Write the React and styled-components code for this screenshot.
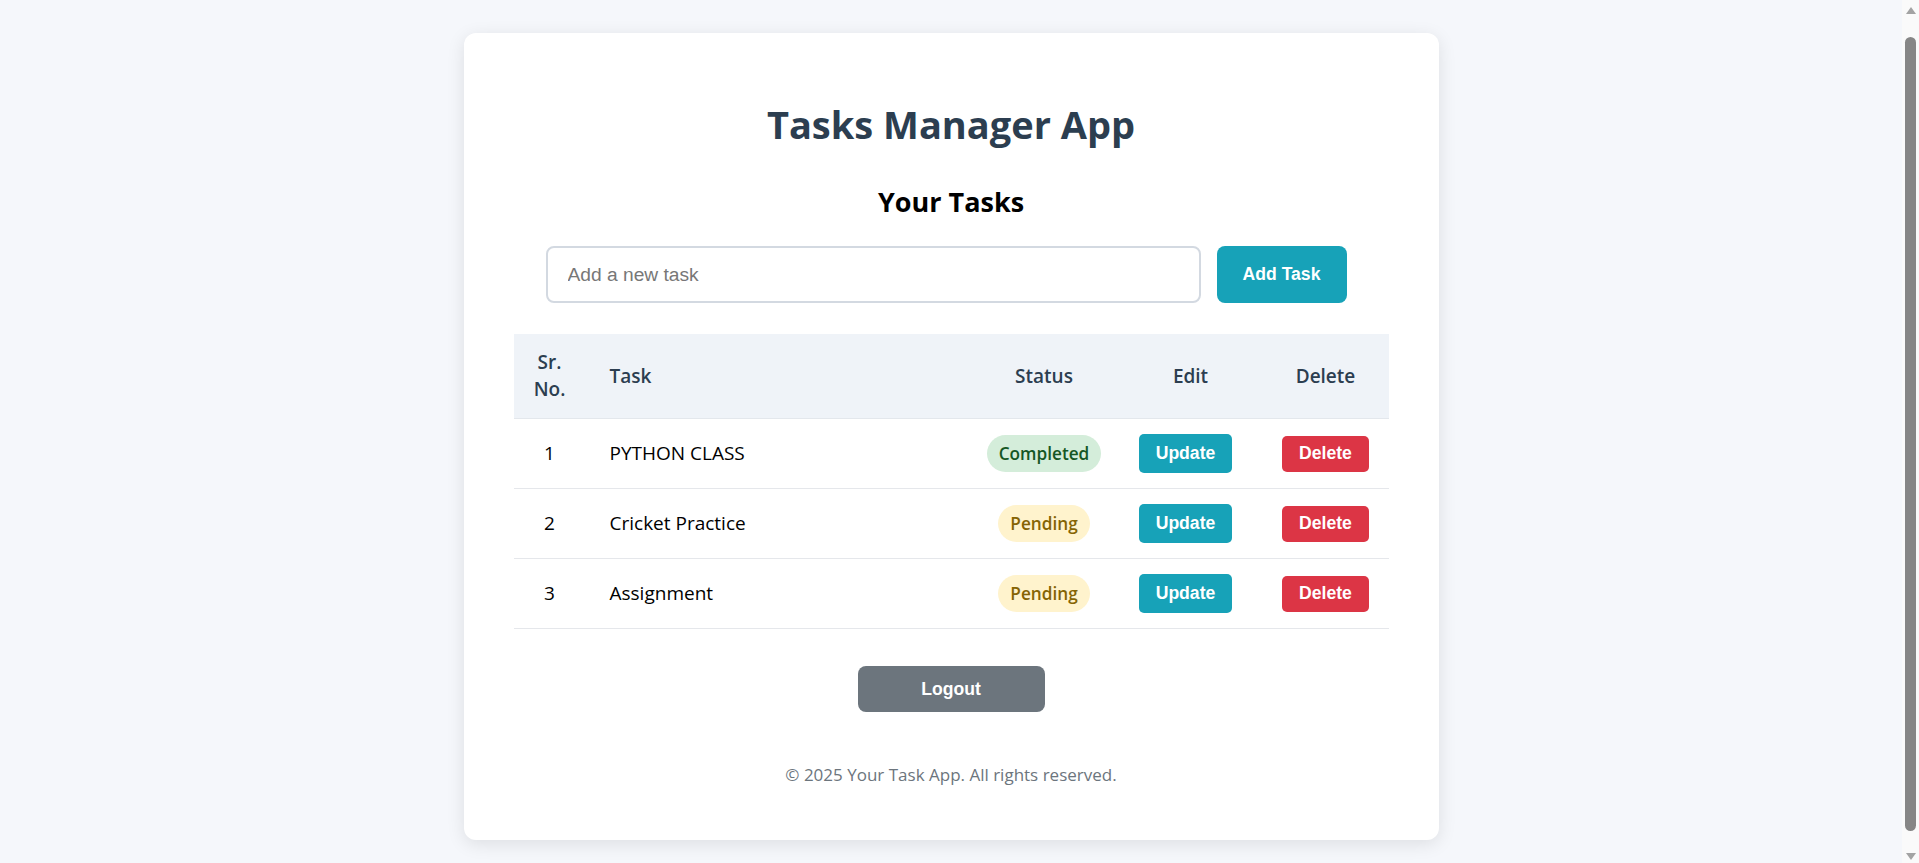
import React from "react";
import styled, { createGlobalStyle } from "styled-components";

const GlobalStyle = createGlobalStyle`
  body {
    margin: 0;
    background: #f5f7fb;
    font-family: "Open Sans", "Noto Sans", sans-serif;
  }
`;

const tasks = [
  { id: 1, title: "PYTHON CLASS", done: true },
  { id: 2, title: "Cricket Practice", done: false },
  { id: 3, title: "Assignment", done: false },
];

const App = () => {
  return (
    <React.Fragment>
      <GlobalStyle />
      <Page>
        <Card>
          <Title>Tasks Manager App</Title>
          <SubTitle>Your Tasks</SubTitle>
          <AddForm onSubmit={(e) => e.preventDefault()}>
            <TaskInput type="text" placeholder="Add a new task" />
            <AddButton type="submit">Add Task</AddButton>
          </AddForm>

          <Table>
            <colgroup>
              <col style={{ width: "72px" }} />
              <col style={{ width: "384px" }} />
              <col style={{ width: "149px" }} />
              <col style={{ width: "144px" }} />
              <col style={{ width: "126px" }} />
            </colgroup>
            <thead>
              <tr>
                <Th>Sr. No.</Th>
                <Th $left>Task</Th>
                <Th>Status</Th>
                <Th>Edit</Th>
                <Th>Delete</Th>
              </tr>
            </thead>
            <tbody>
              {tasks.map((t) => (
                <tr key={t.id}>
                  <Td>{t.id}</Td>
                  <Td $left>{t.title}</Td>
                  <Td>
                    <Badge $done={t.done}>{t.done ? "Completed" : "Pending"}</Badge>
                  </Td>
                  <Td>
                    <UpdateButton>Update</UpdateButton>
                  </Td>
                  <Td>
                    <DeleteButton>Delete</DeleteButton>
                  </Td>
                </tr>
              ))}
            </tbody>
          </Table>

          <LogoutButton>Logout</LogoutButton>
          <Footer>© 2025 Your Task App. All rights reserved.</Footer>
        </Card>
      </Page>

      {/* window scrollbar as seen in the screenshot */}
      <ScrollTrack aria-hidden="true">
        <ScrollArrow />
        <ScrollThumb />
        <ScrollArrow $down />
      </ScrollTrack>
    </React.Fragment>
  );
};

export default App;

const Page = styled.div`
  padding: 33px 17px 43px 0;
`;

const Card = styled.div`
  width: 975px;
  box-sizing: border-box;
  margin: 0 auto;
  padding: 67px 50px 53px;
  background: #fff;
  border-radius: 12px;
  box-shadow: 0 4px 18px rgba(0, 0, 0, 0.1);
  display: flex;
  flex-direction: column;
  align-items: center;
`;

const Title = styled.h1`
  margin: 0;
  font-size: 38px;
  line-height: 48px;
  font-weight: 700;
  color: #2c3e50;
  text-align: center;
`;

const SubTitle = styled.h2`
  margin: 37px 0 0;
  font-size: 27px;
  line-height: 34px;
  font-weight: 700;
  color: #000;
  text-align: center;
`;

const AddForm = styled.form`
  margin-top: 27px;
  display: flex;
  gap: 16px;
  padding-right: 10px;
`;

const TaskInput = styled.input`
  width: 655px;
  height: 57px;
  box-sizing: border-box;
  padding: 0 20px;
  border: 2px solid #d3d9e1;
  border-radius: 8px;
  font-family: "Liberation Sans", Arial, sans-serif;
  font-size: 19.2px;
  color: #333;
  outline: none;
  &::placeholder {
    color: #777;
  }
`;

const BaseButton = styled.button`
  border: none;
  color: #fff;
  font-family: "Liberation Sans", Arial, sans-serif;
  font-weight: 700;
  font-size: 17.6px;
  cursor: pointer;
  box-sizing: border-box;
`;

const AddButton = styled(BaseButton)`
  width: 130px;
  height: 57px;
  border-radius: 8px;
  background: #17a2b8;
`;

const Table = styled.table`
  margin-top: 31px;
  width: 875px;
  border-collapse: collapse;
  table-layout: fixed;
`;

const Th = styled.th`
  background: #eff3f8;
  padding: 15px 15px 15px ${(p) => (p.$left ? "24px" : "15px")};
  font-size: 19px;
  line-height: 27px;
  font-weight: 600;
  color: #2c3e50;
  text-align: ${(p) => (p.$left ? "left" : "center")};
  border-bottom: 1px solid #e3e7ec;
`;

const Td = styled.td`
  padding: 15px 15px 15px ${(p) => (p.$left ? "24px" : "15px")};
  height: 39px;
  font-size: 19px;
  line-height: 27px;
  color: #000;
  text-align: ${(p) => (p.$left ? "left" : "center")};
  vertical-align: middle;
  border-bottom: 1px solid #e5e7eb;
`;

const Badge = styled.span`
  display: inline-block;
  height: 37px;
  line-height: 37px;
  padding: 0 12px;
  border-radius: 19px;
  font-size: 17.2px;
  font-weight: 600;
  background: ${(p) => (p.$done ? "#d4edda" : "#fff3cd")};
  color: ${(p) => (p.$done ? "#155724" : "#856404")};
`;

const UpdateButton = styled(BaseButton)`
  height: 39px;
  padding: 0 17px;
  border-radius: 5px;
  background: #17a2b8;
  margin-right: 10px;
`;

const DeleteButton = styled(BaseButton)`
  height: 36px;
  padding: 0 17px;
  border-radius: 5px;
  background: #dc3545;
  vertical-align: middle;
`;

const LogoutButton = styled(BaseButton)`
  margin-top: 37px;
  width: 187px;
  height: 46px;
  border-radius: 8px;
  background: #6c757d;
`;

const Footer = styled.p`
  margin: 51px 0 0;
  font-size: 17px;
  line-height: 24px;
  color: #6c757d;
`;

const ScrollTrack = styled.div`
  position: fixed;
  top: 0;
  right: 0;
  width: 17px;
  height: 100vh;
  box-sizing: border-box;
  padding: 7px 3px 3px;
  background: #fafafa;
  display: flex;
  flex-direction: column;
  align-items: center;
`;

const ScrollArrow = styled.div`
  width: 0;
  height: 0;
  border-left: 5.5px solid transparent;
  border-right: 5.5px solid transparent;
  ${(p) =>
    p.$down
      ? "border-top: 7px solid #a3a3a3; margin-top: 22px;"
      : "border-bottom: 7px solid #a3a3a3; margin-bottom: 23px;"}
`;

const ScrollThumb = styled.div`
  width: 11px;
  flex: 1;
  border-radius: 6px;
  background: #868686;
`;
